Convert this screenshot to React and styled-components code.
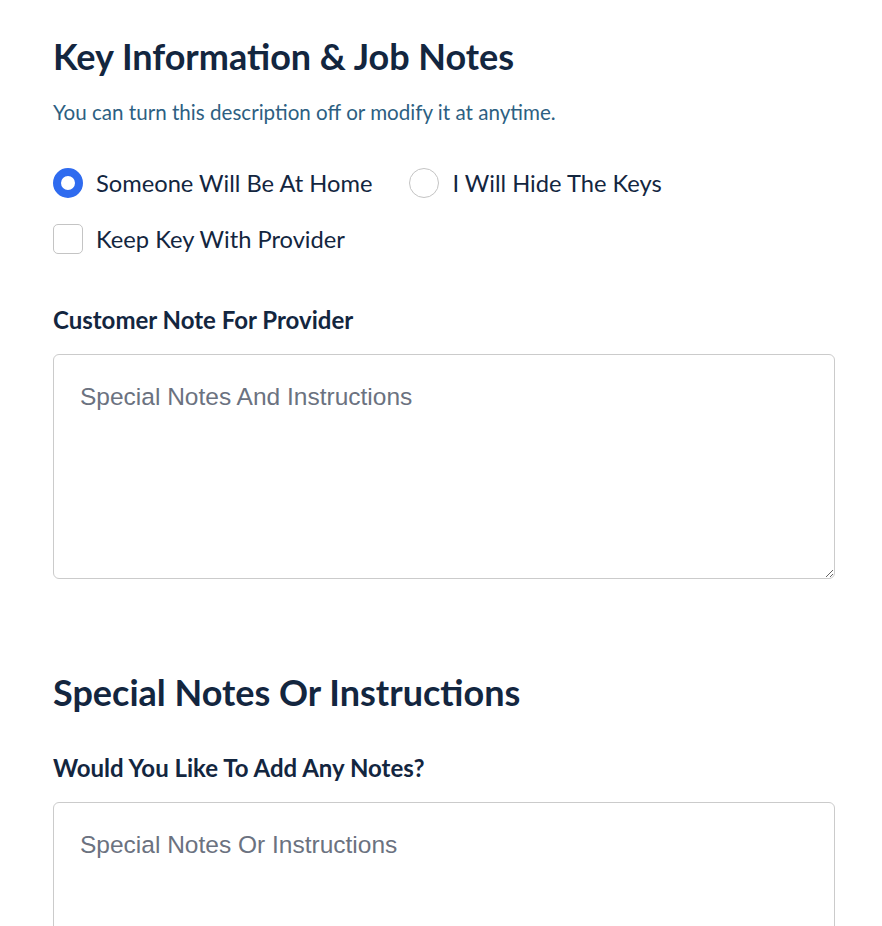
import React from "react";
import styled, { createGlobalStyle } from "styled-components";

const GlobalStyle = createGlobalStyle`
    html, body {
        margin: 0;
        padding: 0;
        background: #ffffff;
    }
    body {
        font-family: Lato, "Open Sans", sans-serif;
        color: #13263f;
    }
`

const Page = styled.div`
    padding: 34px 47px 0 53px;
    display: flex;
    flex-direction: column;
`

const Section = styled.section`
    display: flex;
    flex-direction: column;
    margin-bottom: ${props => props.gap || "0"};
`

const Title = styled.h2`
    margin: 0;
    font-size: 36px;
    font-weight: 700;
    line-height: 44px;
    color: #13263f;
`

const Description = styled.p`
    margin: 20px 0 0;
    font-size: 20.6px;
    line-height: 28px;
    color: #2d5f82;
`

const Options = styled.div`
    display: flex;
    flex-wrap: wrap;
    column-gap: 37px;
    row-gap: 24px;
    margin-top: 41px;
    width: 700px;
`

const Option = styled.label`
    display: flex;
    align-items: center;
    gap: 13px;
    font-size: 23.7px;
    line-height: 32px;
    color: #13263f;
    cursor: pointer;
    flex-basis: ${props => props.full ? "100%" : "auto"};
`

const Radio = styled.span`
    width: 30px;
    height: 30px;
    flex: none;
    box-sizing: border-box;
    border-radius: 50%;
    border: ${props => props.checked ? "8px solid #2f6bef" : "1px solid #c4c4c4"};
    background: #fff;
`

const Checkbox = styled.span`
    width: 30px;
    height: 30px;
    flex: none;
    box-sizing: border-box;
    border-radius: 5px;
    border: 1px solid #c4c4c4;
    background: #fff;
`

const FieldLabel = styled.div`
    font-size: 24px;
    font-weight: 700;
    line-height: 30px;
    color: #13263f;
    margin-top: ${props => props.top || "0"};
`

const NoteArea = styled.textarea`
    margin-top: 19px;
    width: 100%;
    height: 225px;
    box-sizing: border-box;
    padding: 26px 26px;
    border: 1px solid #cbcbcb;
    border-radius: 6px;
    font-family: "Liberation Sans", Arial, sans-serif;
    font-size: 24.5px;
    line-height: 32px;
    color: #13263f;
    resize: vertical;
    outline: none;

    &::placeholder {
        color: #6b7280;
    }
`

const App = () => (
    <>
      <GlobalStyle />
      <Page>
        <Section gap="91px">
            <Title>Key Information &amp; Job Notes</Title>
            <Description>You can turn this description off or modify it at anytime.</Description>
            <Options>
                <Option><Radio checked />Someone Will Be At Home</Option>
                <Option><Radio />I Will Hide The Keys</Option>
                <Option full><Checkbox />Keep Key With Provider</Option>
            </Options>
            <FieldLabel top="50px">Customer Note For Provider</FieldLabel>
            <NoteArea placeholder="Special Notes And Instructions" />
        </Section>
        <Section>
            <Title>Special Notes Or Instructions</Title>
            <FieldLabel top="39px">Would You Like To Add Any Notes?</FieldLabel>
            <NoteArea placeholder="Special Notes Or Instructions" />
        </Section>
      </Page>
    </>
  )

export default App;
